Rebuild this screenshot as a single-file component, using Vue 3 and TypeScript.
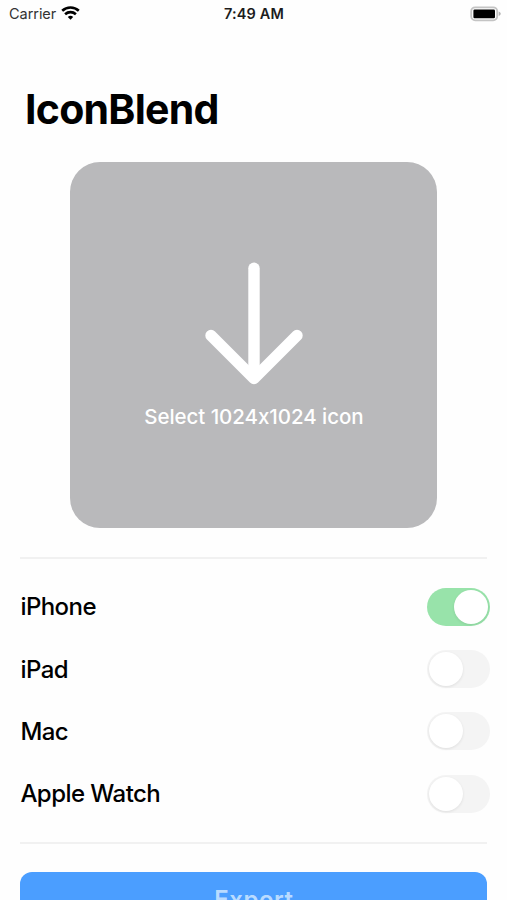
<script setup lang="ts">
import { ref } from 'vue'

interface Platform {
  id: string
  name: string
  enabled: boolean
}

const platforms = ref<Platform[]>([
  { id: 'iphone', name: 'iPhone', enabled: true },
  { id: 'ipad', name: 'iPad', enabled: false },
  { id: 'mac', name: 'Mac', enabled: false },
  { id: 'watch', name: 'Apple Watch', enabled: false },
])

function toggle(platform: Platform): void {
  platform.enabled = !platform.enabled
}
</script>

<template>
  <div class="screen">
    <header class="status">
      <div class="network">
        <span class="carrier">Carrier</span>
        <svg class="wifi" width="19" height="14" viewBox="0 0 19 14" fill="none" stroke="#000" stroke-width="2.6">
          <path d="M1.2 4.8 C5.9 .4 13.1 .4 17.8 4.8" />
          <path d="M4.1 8.2 C7.2 5.4 11.8 5.4 14.9 8.2" />
          <path d="M6.8 10.9 Q9.5 8.6 12.2 10.9 L9.5 13.7Z" fill="#000" stroke="none" />
        </svg>
      </div>
      <span class="time">7:49 AM</span>
      <svg class="battery" width="31" height="16" viewBox="0 0 31 16">
        <rect x="1.2" y="1.3" width="26" height="13" rx="4" fill="#fff" stroke="#c4c4c4" stroke-width="1.8" />
        <rect x="3.4" y="3.5" width="21.6" height="8.7" rx="1.2" fill="#000" />
        <path d="M28.7 5.5 Q30.8 6.3 30.8 7.8 Q30.8 9.3 28.7 10.1Z" fill="#b5b5b5" />
      </svg>
    </header>

    <h1 class="title">IconBlend</h1>

    <button class="picker" type="button">
      <svg class="arrow" width="98" height="124" viewBox="0 0 98 124" fill="none" stroke="#fff" stroke-width="11.4" stroke-linecap="round" stroke-linejoin="round">
        <path d="M49 7.2V116" />
        <path d="M6 74.5L49 117.5L92 74.5" />
      </svg>
      <span class="hint">Select 1024x1024 icon</span>
    </button>

    <ul class="platforms">
      <li v-for="platform in platforms" :key="platform.id" class="row">
        <span class="name" :class="platform.id">{{ platform.name }}</span>
        <button
          class="switch"
          :class="{ on: platform.enabled }"
          type="button"
          role="switch"
          :aria-checked="platform.enabled"
          @click="toggle(platform)"
        >
          <span class="knob"></span>
        </button>
      </li>
    </ul>

    <button class="export" type="button"><span class="export-label">Export</span></button>
  </div>
</template>

<style>
body {
  margin: 0;
  overflow: hidden;
}
</style>

<style scoped>
.screen {
  box-sizing: border-box;
  width: 507px;
  height: 900px;
  overflow: hidden;
  background: #fefefe;
  color: #000;
  font-family: Inter, "Liberation Sans", sans-serif;
  font-feature-settings: "calt" 0;
}
button {
  border: 0;
  padding: 0;
  font: inherit;
  font-feature-settings: inherit;
}
.status {
  display: grid;
  grid-template-columns: 1fr auto 1fr;
  height: 27px;
  padding: 0 6px 0 9px;
  align-items: center;
}
.network {
  display: flex;
  align-items: center;
  gap: 5px;
}
.carrier {
  font-size: 14.5px;
  letter-spacing: -0.05px;
  color: #333;
}
.wifi {
  margin-top: -1px;
}
.time {
  margin-left: -2px;
  font-size: 14.5px;
  font-weight: 600;
  letter-spacing: 0.15px;
  color: #1c1c1c;
}
.battery {
  justify-self: end;
}
.title {
  margin: 57px 0 0 25px;
  font-size: 41px;
  line-height: 50px;
  font-weight: 700;
  letter-spacing: -0.75px;
}
.picker {
  display: flex;
  flex-direction: column;
  align-items: center;
  width: 367px;
  height: 366px;
  margin: 28.4px 0 0 70.4px;
  padding-top: 99px;
  box-sizing: border-box;
  border-radius: 30px;
  background: #b9b9bb;
  color: #fff;
}
.hint {
  margin-top: 19px;
  font-size: 20.5px;
  line-height: 26px;
  font-weight: 550;
  letter-spacing: -0.05px;
  white-space: nowrap;
}
.platforms {
  width: 467px;
  margin: 29px 0 0 20.4px;
  padding: 16.5px 0 17px;
  border-top: 2px solid #f1f1f1;
  border-bottom: 2px solid #f1f1f1;
  list-style: none;
}
.row {
  display: flex;
  align-items: center;
  justify-content: space-between;
  width: 469.5px;
  height: 62.2px;
}
.name {
  padding-top: 1px;
  font-size: 24px;
  line-height: 30px;
  font-weight: 450;
  letter-spacing: -0.55px;
}
.switch {
  width: 62.5px;
  height: 38px;
  padding: 2px;
  box-sizing: border-box;
  border-radius: 19px;
  background: #f4f4f4;
  display: flex;
}
.switch.on {
  justify-content: flex-end;
  background: #98e3aa;
}
.knob {
  width: 34px;
  height: 34px;
  border-radius: 50%;
  background: #fff;
  box-shadow: 0 1px 3px rgba(0, 0, 0, 0.09);
}
.export {
  display: flex;
  justify-content: center;
  width: 467px;
  height: 62px;
  margin: 28px 0 0 20.4px;
  padding-top: 13.5px;
  box-sizing: border-box;
  border-radius: 12px;
  background: #4b9eff;
  color: #b9dbff;
}
.export-label {
  font-size: 24px;
  line-height: 30px;
  font-weight: 600;
  letter-spacing: 0.5px;
}
</style>
